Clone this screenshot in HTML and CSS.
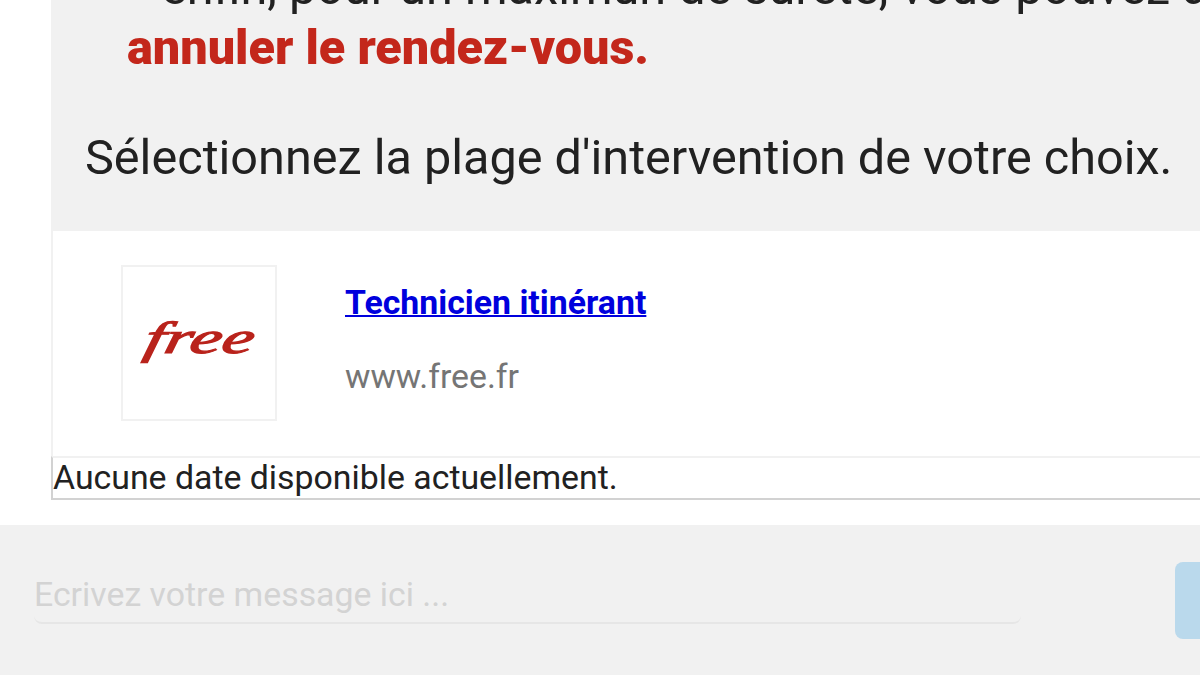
FILE: index.html
```
<!DOCTYPE html>
<html lang="fr">
<head>
    <meta charset="UTF-8">
    <meta name="viewport" content="width=device-width, initial-scale=1.0">
    <title>Rendez-vous technicien - Free</title>
    <link rel="stylesheet" href="styles.css">
</head>
<body>
<main class="chat">
    <div class="message">
        <div class="message-text">
            <p class="message-item">enfin, pour un maximun de sureté, vous pouvez a</p>
            <p class="message-cancel">annuler le rendez-vous.</p>
            <p class="message-select">Sélectionnez la plage d'intervention de votre choix.</p>
        </div>
        <div class="card">
            <div class="card-logo">
                <svg class="logo" viewBox="0 0 152 152" role="img" aria-label="Free">
                    <text class="logo-text" transform="translate(19.5 86) skewX(-12) scale(1.6 1)">free</text>
                </svg>
            </div>
            <div class="card-info">
                <a class="card-title" href="#">Technicien itinérant</a>
                <span class="card-site">www.free.fr</span>
            </div>
        </div>
        <div class="dates">Aucune date disponible actuellement.</div>
    </div>
</main>

<footer class="composer">
    <input type="text" class="composer-input" placeholder="Ecrivez votre message ici ...">
    <button class="composer-send" aria-label="Envoyer"></button>
</footer>
</body>
</html>
```
FILE: styles.css
```
:root {
    --text-color: #212121;
    --text-light: #757575;
    --panel-background: #F1F1F1;
    --free-red: #C3271B;
}

* {
    box-sizing: border-box;
    margin: 0;
    padding: 0;
}

body {
    font-family: Roboto, sans-serif;
    background-color: #FFFFFF;
    color: var(--text-color);
    height: 100vh;
    display: flex;
    flex-direction: column;
    overflow: hidden;
}

.chat {
    height: 525px;
    flex-shrink: 0;
    padding-left: 51px;
    display: flex;
    flex-direction: column;
    justify-content: flex-end;
    padding-bottom: 25px;
}

.message-text {
    height: 290px;
    padding: 17px 0 0 34px;
    background-color: var(--panel-background);
    font-size: 48.6px;
    line-height: 60px;
    white-space: nowrap;
    overflow: hidden;
}

.message-item {
    padding-left: 76px;
}

.message-cancel {
    padding-left: 42px;
    color: var(--free-red);
    font-weight: 900;
}

.message-select {
    margin-top: 50px;
}

.card {
    height: 225px;
    display: flex;
    padding: 34px 0 0 68px;
    border-left: 2px solid #F1F1F1;
}

.card-logo {
    width: 156px;
    height: 156px;
    border: 2px solid #F1F1F1;
}

.logo {
    display: block;
    width: 100%;
    height: 100%;
}

.logo-text {
    font-family: "Liberation Serif", serif;
    font-size: 45px;
    font-style: italic;
    fill: #B9231C;
    stroke: #B9231C;
    stroke-width: 1.2px;
}

.card-info {
    display: flex;
    flex-direction: column;
    align-items: flex-start;
    padding: 18px 0 0 68px;
    gap: 34px;
    font-size: 33.85px;
    line-height: 40px;
}

.card-title {
    color: #0000DD;
    font-weight: 700;
    text-decoration-thickness: 2px;
}

.card-site {
    color: var(--text-light);
}

.dates {
    height: 44px;
    border: 2px solid #D2D2D2;
    border-top-color: #F1F1F1;
    border-right: none;
    font-size: 33.85px;
    line-height: 40px;
}

.composer {
    flex: 1;
    display: flex;
    align-items: flex-start;
    justify-content: space-between;
    padding: 37px 0 0 34px;
    background-color: var(--panel-background);
}

.composer-input {
    width: 987px;
    height: 62px;
    padding-top: 5px;
    border: none;
    border-bottom: 2px solid #E6E6E6;
    border-radius: 8px;
    background-color: transparent;
    font-family: inherit;
    font-size: 33.85px;
}

.composer-input::placeholder {
    color: #D3D3D3;
}

.composer-send {
    width: 25px;
    height: 77px;
    border: none;
    border-radius: 8px 0 0 8px;
    background-color: #BAD9EC;
}
```
